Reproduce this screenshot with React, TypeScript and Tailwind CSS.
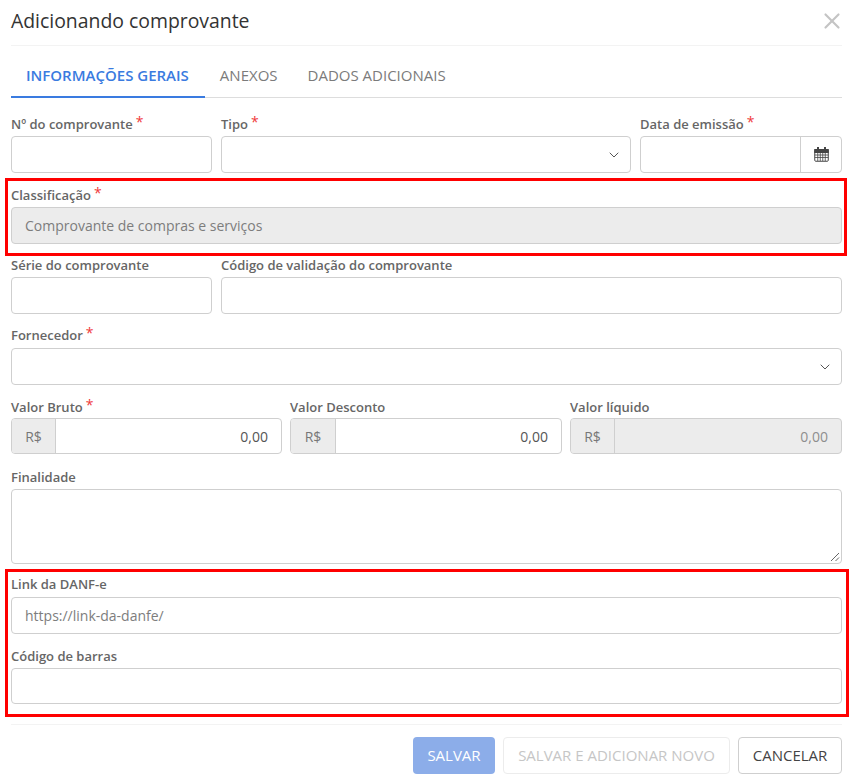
import React from "react";
import { ChevronDown, X } from "lucide-react";

const inputCls = "h-[37px] w-full rounded-[4px] border border-[#cfcfcf] bg-white";

function Label({ text, required }: { text: string; required?: boolean }) {
  return (
    <div className="flex h-[20px] items-center text-[13px] font-semibold leading-[20px] text-[#666666]">
      {text}
      {required && <span className="relative -top-[2px] ml-[3px] text-[14px] font-normal leading-none text-[#f03a3a]">*</span>}
    </div>
  );
}

function Money({ value, disabled, wide }: { value: string; disabled?: boolean; wide?: boolean }) {
  return (
    <div className={`mt-[1px] flex h-[36px] overflow-hidden rounded-[4px] border border-[#cfcfcf] text-[14px] ${disabled ? "bg-[#ececec]" : "bg-white"}`}>
      <div className={`flex items-center justify-center border-r border-[#cfcfcf] bg-[#ececec] text-[#777777] ${wide ? "w-[45px]" : "w-[44px]"}`}>R$</div>
      <div className={`flex flex-1 items-center justify-end pr-[13px] ${disabled ? "text-[#8e8e8e]" : "text-[#555555]"}`}>{value}</div>
    </div>
  );
}

function CalendarIcon() {
  return (
    <svg width="15" height="15" viewBox="0 0 15 15" fill="none" stroke="#444444">
      <rect x="0.75" y="2.5" width="13.5" height="11.75" rx="1" strokeWidth="1" />
      <rect x="0.75" y="2.5" width="13.5" height="3" fill="#444444" strokeWidth="1" />
      <path d="M4 0.5V3.5M11 0.5V3.5" strokeWidth="2" strokeLinecap="round" />
      <path d="M0.75 8H14.25M0.75 10.5H14.25M3.75 5.5V14M6.25 5.5V14M8.75 5.5V14M11.25 5.5V14" strokeWidth="0.8" />
    </svg>
  );
}

export default function App() {
  return (
    <div className="h-[780px] w-[851px] overflow-hidden bg-white pl-[11px] pr-[9px] font-['Open_Sans',sans-serif]">
      <div className="flex h-[46px] items-center justify-between border-b border-[#f3f3f3] pb-[3px]">
        <h1 className="text-[19.4px] leading-none text-[#333333]">Adicionando comprovante</h1>
        <X size={26} strokeWidth={2} className="mr-[-3px] text-[#c4c4c4]" />
      </div>

      <div className="mt-[9px] flex h-[43px] border-b border-[#dddddd] text-[15px]">
        <div className="flex h-[43px] items-center justify-center border-b-2 border-[#3a7be0] pl-[15px] pr-[16px] font-semibold text-[#3a7be0]">INFORMAÇÕES GERAIS</div>
        <div className="flex h-[42px] items-center justify-center px-[15px] pb-[1px] text-[#7b7b7b]">ANEXOS</div>
        <div className="flex h-[42px] items-center px-[15px] pb-[1px] text-[#7b7b7b]">DADOS ADICIONAIS</div>
      </div>

      <div className="mt-[16px] grid grid-cols-[201px_410px_202px] gap-x-[9px]">
        <div>
          <Label text="Nº do comprovante" required />
          <div className={`${inputCls} mt-[2px]`} />
        </div>
        <div>
          <Label text="Tipo" required />
          <div className={`${inputCls} mt-[2px] flex items-center justify-end pr-[8px]`}>
            <ChevronDown size={16} strokeWidth={1.5} className="text-[#555555]" />
          </div>
        </div>
        <div>
          <Label text="Data de emissão" required />
          <div className={`${inputCls} mt-[2px] flex justify-end`}>
            <div className="flex w-[41px] items-center justify-center border-l border-[#cfcfcf]">
              <CalendarIcon />
            </div>
          </div>
        </div>
      </div>

      <div className="ml-[-6px] mr-[-5px] mt-[5px] h-[78px] border-[3px] border-[#ff0000] pl-[3px] pr-[2px] pt-[4px]">
        <Label text="Classificação" required />
        <div className="mt-[2px] flex h-[37px] items-center rounded-[4px] border border-[#cfcfcf] bg-[#ececec] pl-[13px] text-[14px] text-[#7d7d7d]">Comprovante de compras e serviços</div>
      </div>

      <div className="mt-[-1px] grid grid-cols-[201px_621px] gap-x-[9px]">
        <div>
          <Label text="Série do comprovante" />
          <div className={`${inputCls} mt-[2px]`} />
        </div>
        <div>
          <Label text="Código de validação do comprovante" />
          <div className={`${inputCls} mt-[2px]`} />
        </div>
      </div>

      <div className="mt-[11px]">
        <Label text="Fornecedor" required />
        <div className={`${inputCls} mt-[3px] flex items-center justify-end pr-[8px]`}>
          <ChevronDown size={16} strokeWidth={1.5} className="text-[#555555]" />
        </div>
      </div>

      <div className="mt-[12px] grid grid-cols-[271px_272px_272px] gap-x-[8px]">
        <div>
          <Label text="Valor Bruto" required />
          <Money value="0,00" />
        </div>
        <div>
          <Label text="Valor Desconto" />
          <Money value="0,00" wide />
        </div>
        <div>
          <Label text="Valor líquido" />
          <Money value="0,00" disabled />
        </div>
      </div>

      <div className="mt-[13px]">
        <Label text="Finalidade" />
        <div className="relative mt-[2px] h-[75px] rounded-[4px] border border-[#cfcfcf] bg-white">
          <svg width="10" height="10" viewBox="0 0 10 10" className="absolute bottom-[1px] right-[1px]" stroke="#666666" strokeWidth="1">
            <path d="M1 9L9 1M5.5 9L9 5.5" />
          </svg>
        </div>
      </div>

      <div className="ml-[-6px] mr-[-7px] mt-[5px] h-[148px] border-[3px] border-[#ff0000] pl-[3px] pr-[4px] pt-[2px]">
        <Label text="Link da DANF-e" />
        <div className="mt-[3px] flex h-[37px] items-center rounded-[4px] border border-[#cfcfcf] bg-white pl-[13px] text-[14px] text-[#7d7d7d]">https://link-da-danfe/</div>
        <div className="mt-[12px]">
          <Label text="Código de barras" />
          <div className="mt-[2px] h-[36px] rounded-[4px] border border-[#cfcfcf] bg-white" />
        </div>
      </div>

      <div className="mt-[7px] flex justify-end gap-[8px] border-t border-[#f3f3f3] pt-[12px] text-[15px]">
        <div className="flex h-[37px] w-[82px] items-center justify-center rounded-[4px] bg-[#8cade9] font-medium text-white">SALVAR</div>
        <div className="flex h-[37px] w-[227px] items-center justify-center rounded-[4px] border border-[#ececec] text-[#c6c6c6]">SALVAR E ADICIONAR NOVO</div>
        <div className="flex h-[37px] w-[104px] items-center justify-center rounded-[4px] border border-[#cfcfcf] text-[#444444]">CANCELAR</div>
      </div>
    </div>
  );
}
